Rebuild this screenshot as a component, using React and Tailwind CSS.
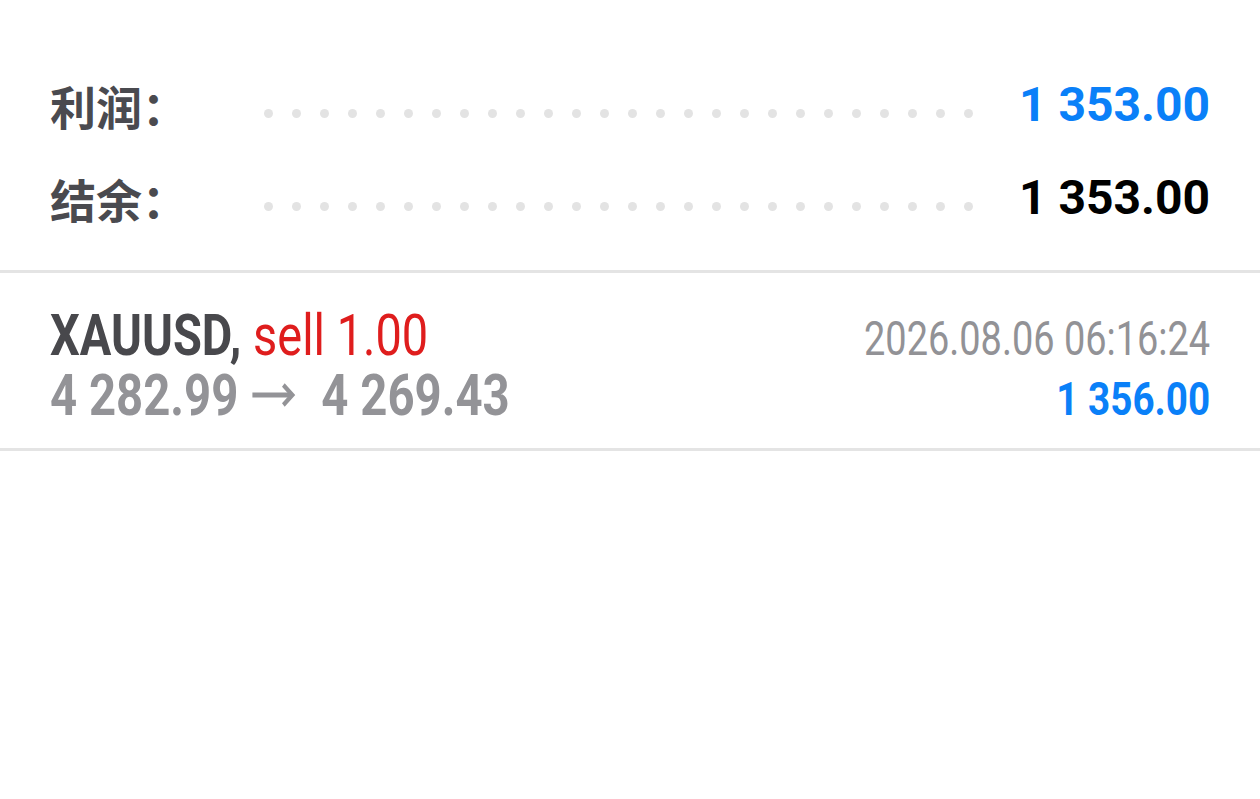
import React from "react";

const dots = Array.from({ length: 26 });

function Row({ label, value, valueClass }) {
  return (
    <div className="flex h-[93px] items-center">
      <div className="w-[214px] font-['Noto_Sans_CJK_SC','Noto_Sans',sans-serif] text-[46px] font-bold leading-none text-[#4a4a4f]">
        {label}
      </div>
      <div className="mr-[46px] mt-[17px] flex flex-1 justify-between">
        {dots.map((_, i) => (
          <span key={i} className="h-[9px] w-[9px] rounded-full bg-[#e3e3e3]" />
        ))}
      </div>
      <div className={`font-['Roboto',sans-serif] text-[48px] font-bold leading-none ${valueClass}`}>
        {value}
      </div>
    </div>
  );
}

export default function App() {
  return (
    <main className="min-h-[799px] w-full bg-white font-['Roboto',sans-serif]">
      <section className="px-[50px] pb-[26px] pt-[58px]">
        <Row label="利润：" value="1 353.00" valueClass="text-[#0a80f8]" />
        <Row label="结余：" value="1 353.00" valueClass="text-black" />
      </section>

      <div className="h-[3px] bg-[#e4e4e4]" />

      <section className="px-[50px] pb-[20px] pt-[34px]">
        <div className="flex items-baseline justify-between leading-[57px]">
          <span className="inline-block origin-left scale-x-[0.81] whitespace-nowrap text-[58px]">
            <span className="font-bold text-[#48484c]">XAUUSD,</span>{" "}
            <span className="text-[#df1d1d]">sell 1.00</span>
          </span>
          <span className="inline-block origin-right scale-x-[0.79] whitespace-nowrap text-[48px] text-[#929296]">
            2026.08.06 06:16:24
          </span>
        </div>
        <div className="flex items-baseline justify-between leading-[57px]">
          <span className="inline-block origin-left scale-x-[0.83] whitespace-nowrap text-[57px] font-bold text-[#939397]">
            4 282.99
            <svg
              viewBox="0 0 60 30"
              className="mb-[10px] ml-[12px] mr-[28px] inline-block h-[26px] w-[60px] align-middle"
              fill="none"
              stroke="#939397"
              strokeWidth="5.5"
            >
              <path d="M1 15H56" />
              <path d="M44 3.5L56.5 15L44 26.5" strokeLinejoin="miter" />
            </svg>
            4 269.43
          </span>
          <span className="inline-block origin-right scale-x-[0.84] whitespace-nowrap text-[46px] font-bold text-[#0a80f8]">
            1 356.00
          </span>
        </div>
      </section>

      <div className="h-[3px] bg-[#e4e4e4]" />
    </main>
  );
}
